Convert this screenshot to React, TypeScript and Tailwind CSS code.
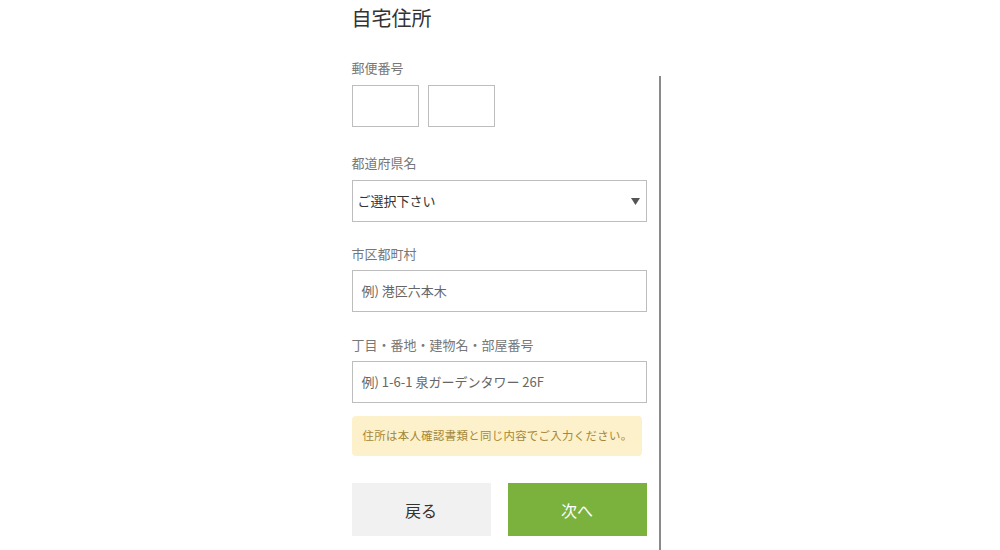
import {ReactNode} from 'react';

const jp = {fontFamily: '"Noto Sans CJK JP", "Noto Sans", sans-serif'};

function Label({children, className = ''}: {children: ReactNode; className?: string}) {
  return <div className={`text-[13px] leading-[20px] text-[#777] ${className}`}>{children}</div>;
}

function TextBox({placeholder, className = ''}: {placeholder: string; className?: string}) {
  return (
    <div
      className={`flex h-[42px] items-center border border-[#bdbdbd] bg-white px-[9px] text-[13px] text-[#666] ${className}`}
    >
      {placeholder}
    </div>
  );
}

export default function App() {
  return (
    <div className="flex h-[550px] justify-center overflow-hidden bg-white" style={jp}>
      <div className="ml-[12px] flex w-[295px] flex-col pt-[3px]">
        <h1 className="text-[20px] leading-[30px] text-[#333]">自宅住所</h1>

        <Label className="mt-[25px]">郵便番号</Label>
        <div className="mt-[7px] flex gap-[9px]">
          <div className="h-[42px] w-[67px] border border-[#bdbdbd]"></div>
          <div className="h-[42px] w-[67px] border border-[#bdbdbd]"></div>
        </div>

        <Label className="mt-[26px]">都道府県名</Label>
        <div className="mt-[7px] flex h-[42px] items-center justify-between border border-[#bdbdbd] pl-[5px] pr-[6px] text-[13px] text-[#333]">
          <span>ご選択下さい</span>
          <svg width="9" height="7" viewBox="0 0 9 7">
            <path d="M0 0h9L4.5 7z" fill="#555" />
          </svg>
        </div>

        <Label className="mt-[22px]">市区都町村</Label>
        <TextBox className="mt-[6px]" placeholder="例) 港区六本木" />

        <Label className="mt-[23px]">丁目・番地・建物名・部屋番号</Label>
        <TextBox className="mt-[6px] text-[#555]" placeholder="例) 1-6-1 泉ガーデンタワー 26F" />

        <div className="mt-[13px] mr-[5px] flex h-[40px] items-center whitespace-nowrap rounded-[4px] bg-[#fdf1cb] px-[11px] text-[11.4px] tracking-[0.35px] text-[#a3873a]">
          住所は本人確認書類と同じ内容でご入力ください。
        </div>

        <div className="mt-[27px] flex gap-[17px]">
          <button className="h-[53px] flex-1 bg-[#f1f1f1] text-[16px] text-[#333]">戻る</button>
          <button className="h-[53px] flex-1 bg-[#7bb23e] text-[16px] text-white">次へ</button>
        </div>
      </div>
      <div className="ml-[12px] mt-[76px] w-[2px] self-stretch bg-[#8a8a8a]"></div>
    </div>
  );
}
